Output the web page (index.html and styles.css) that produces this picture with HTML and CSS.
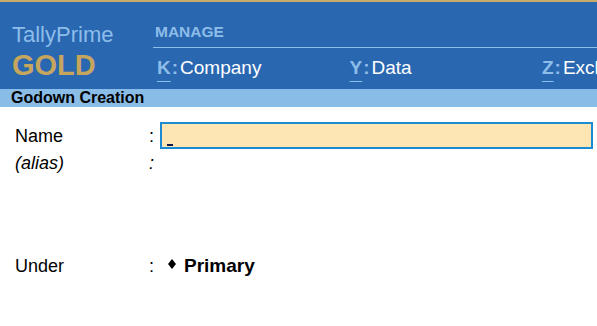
FILE: index.html
```html
<!DOCTYPE html>
<html lang="en">
<head>
  <meta charset="UTF-8">
  <meta name="viewport" content="width=device-width, initial-scale=1.0">
  <title>TallyPrime - Godown Creation</title>
  <link rel="stylesheet" href="styles.css">
</head>
<body>
  <header class="topbar">
    <div class="brand">
      <div class="brand-name">TallyPrime</div>
      <div class="brand-edition">GOLD</div>
    </div>
    <nav class="menu">
      <div class="menu-title">MANAGE</div>
      <div class="menu-items">
        <span class="menu-item"><span class="key">K</span><span class="colon">:</span>Company</span>
        <span class="menu-item"><span class="key">Y</span><span class="colon">:</span>Data</span>
        <span class="menu-item"><span class="key">Z</span><span class="colon">:</span>Exchange</span>
      </div>
    </nav>
  </header>

  <div class="screen-title">Godown Creation</div>

  <main class="form">
    <div class="row">
      <span class="label">Name</span>
      <span class="sep">:</span>
      <div class="field"><span class="caret"></span></div>
    </div>
    <div class="row row-alias">
      <span class="label">(alias)</span>
      <span class="sep">:</span>
      <span></span>
    </div>
    <div class="row row-under">
      <span class="label">Under</span>
      <span class="sep">:</span>
      <span class="value">
        <svg class="diamond" width="8" height="10" viewBox="0 0 8 10"><polygon points="4,0 8,5 4,10 0,5" fill="#000"/></svg>
        <strong>Primary</strong>
      </span>
    </div>
  </main>
</body>
</html>
```

FILE: styles.css
```css
:root {
  --header-bg: #2967b1;
  --bar-bg: #89bce6;
  --gold: #c6a65e;
  --light-blue: #8dbde9;
  --field-bg: #fde6b3;
  --field-border: #1b8bd1;
}

body {
  margin: 0;
  font-family: 'Liberation Sans', Arial, sans-serif;
  background: #fff;
  color: #000;
  overflow: hidden;
}

/* Header */
.topbar {
  display: flex;
  height: 87px;
  background-color: var(--header-bg);
  border-top: 2px solid #c9ac68;
  white-space: nowrap;
  overflow: hidden;
}

.brand {
  width: 141px;
  padding: 20px 0 0 12px;
  flex-shrink: 0;
}

.brand-name {
  font-size: 22px;
  line-height: 25px;
  color: var(--light-blue);
}

.brand-edition {
  margin-top: 3px;
  font-size: 29px;
  line-height: 30px;
  font-weight: bold;
  color: var(--gold);
}

.menu {
  flex: 1;
  display: flex;
  flex-direction: column;
}

.menu-title {
  padding: 21px 0 6px 2px;
  font-size: 15.5px;
  line-height: 18px;
  font-weight: bold;
  color: var(--light-blue);
  border-bottom: 1px solid var(--light-blue);
}

.menu-items {
  display: flex;
  padding: 9px 0 0 4px;
}

.menu-item {
  width: 192.5px;
  flex-shrink: 0;
  font-size: 19px;
  line-height: 22px;
  color: #fff;
}

.key {
  font-weight: bold;
  color: var(--light-blue);
  text-decoration: underline;
  text-decoration-thickness: 1px;
  text-underline-offset: 7px;
}

.colon {
  font-weight: bold;
  color: var(--light-blue);
  margin: 0 2px 0 1px;
}

/* Title bar */
.screen-title {
  height: 18px;
  line-height: 18px;
  padding-left: 11px;
  background-color: var(--bar-bg);
  font-size: 16px;
  font-weight: bold;
}

/* Form */
.form {
  padding: 15px 4px 0 15px;
}

.row {
  display: grid;
  grid-template-columns: 134px 11px 1fr;
  align-items: center;
  font-size: 18px;
  line-height: 22px;
}

.row-alias {
  margin-top: 3px;
  font-style: italic;
}

.row-under {
  margin-top: 81px;
}

.field {
  height: 27px;
  box-sizing: border-box;
  border: 2px solid var(--field-border);
  background-color: var(--field-bg);
  display: flex;
  align-items: flex-end;
}

.caret {
  width: 6px;
  height: 2px;
  margin: 0 0 1px 5px;
  background: #0f1a4d;
}

.value {
  display: flex;
  align-items: center;
  padding-left: 8px;
}

.value strong {
  font-size: 19px;
}

.diamond {
  margin: 0 8px 4px 0;
}
```
